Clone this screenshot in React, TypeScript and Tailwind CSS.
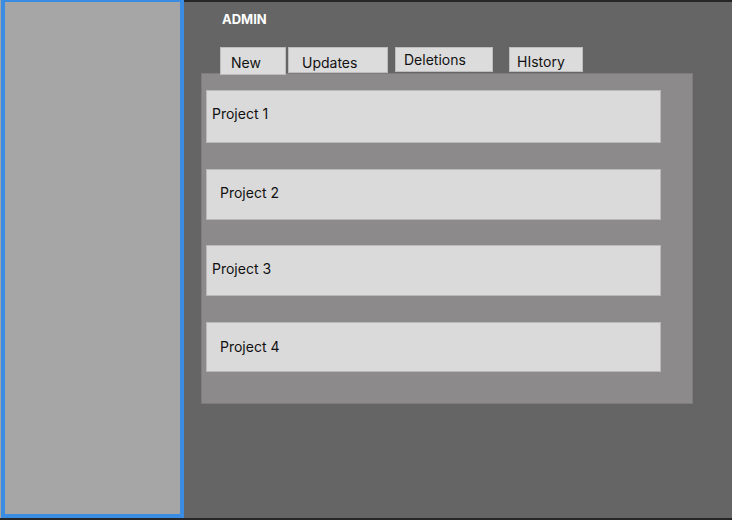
const tabs = [
  { label: 'New', cls: 'w-[66px] h-[28px] pl-[10px] pt-[6px] mr-[2px] z-10' },
  { label: 'Updates', cls: 'w-[100px] h-[26px] pl-[13px] pt-[6px] mr-[7px]' },
  { label: 'Deletions', cls: 'w-[98px] h-[25px] pl-[8px] pt-[3px] mr-[16px]' },
  { label: 'HIstory', cls: 'w-[74px] h-[25px] pl-[7px] pt-[5px]' },
];

const projects = [
  { name: 'Project 1', cls: 'h-[53px] pl-[5px] pb-[7px]', gap: 'mt-[16px]' },
  { name: 'Project 2', cls: 'h-[51px] pl-[13px] pb-[5px]', gap: 'mt-[26px]' },
  { name: 'Project 3', cls: 'h-[51px] pl-[5px] pb-[5px]', gap: 'mt-[25px]' },
  { name: 'Project 4', cls: 'h-[50px] pl-[13px] pb-[1px]', gap: 'mt-[26px]' },
];

const App = () => {
  return (
    <div className="flex w-[732px] h-[520px] bg-[#262626] font-['Inter',sans-serif] overflow-hidden">
      {/* sidebar */}
      <div className="w-[184px] h-[518px] shrink-0 pl-[1px] bg-[#a6a6a6]">
        <div className="w-full h-full border-4 border-[#3b8de3] border-t-2 bg-[#a6a6a6]" />
      </div>

      {/* main */}
      <div className="flex-1 mt-[2px] h-[516px] bg-[#656565] pl-[17px]">
        <div className="pl-[21px] pt-[8px] text-[13px] font-bold text-white leading-[18px]">ADMIN</div>

        <div className="flex items-start pl-[19px] mt-[19px]">
          {tabs.map((t) => (
            <div
              key={t.label}
              className={`${t.cls} relative bg-[#dcdcdc] border border-[#bdbdbd] text-[14px] leading-[18px] text-[#111]`}
            >
              {t.label}
            </div>
          ))}
        </div>

        <div className="relative -mt-[2px] w-[492px] h-[331px] bg-[#8c8a8a] border border-[#7e7c7c] pl-[4px]">
          {projects.map((p) => (
            <div
              key={p.name}
              className={`${p.gap} ${p.cls} w-[455px] flex items-center bg-[#dadada] border border-[#b9b9b9] text-[14px] text-[#111]`}
            >
              {p.name}
            </div>
          ))}
        </div>
      </div>
    </div>
  );
};

export default App;
